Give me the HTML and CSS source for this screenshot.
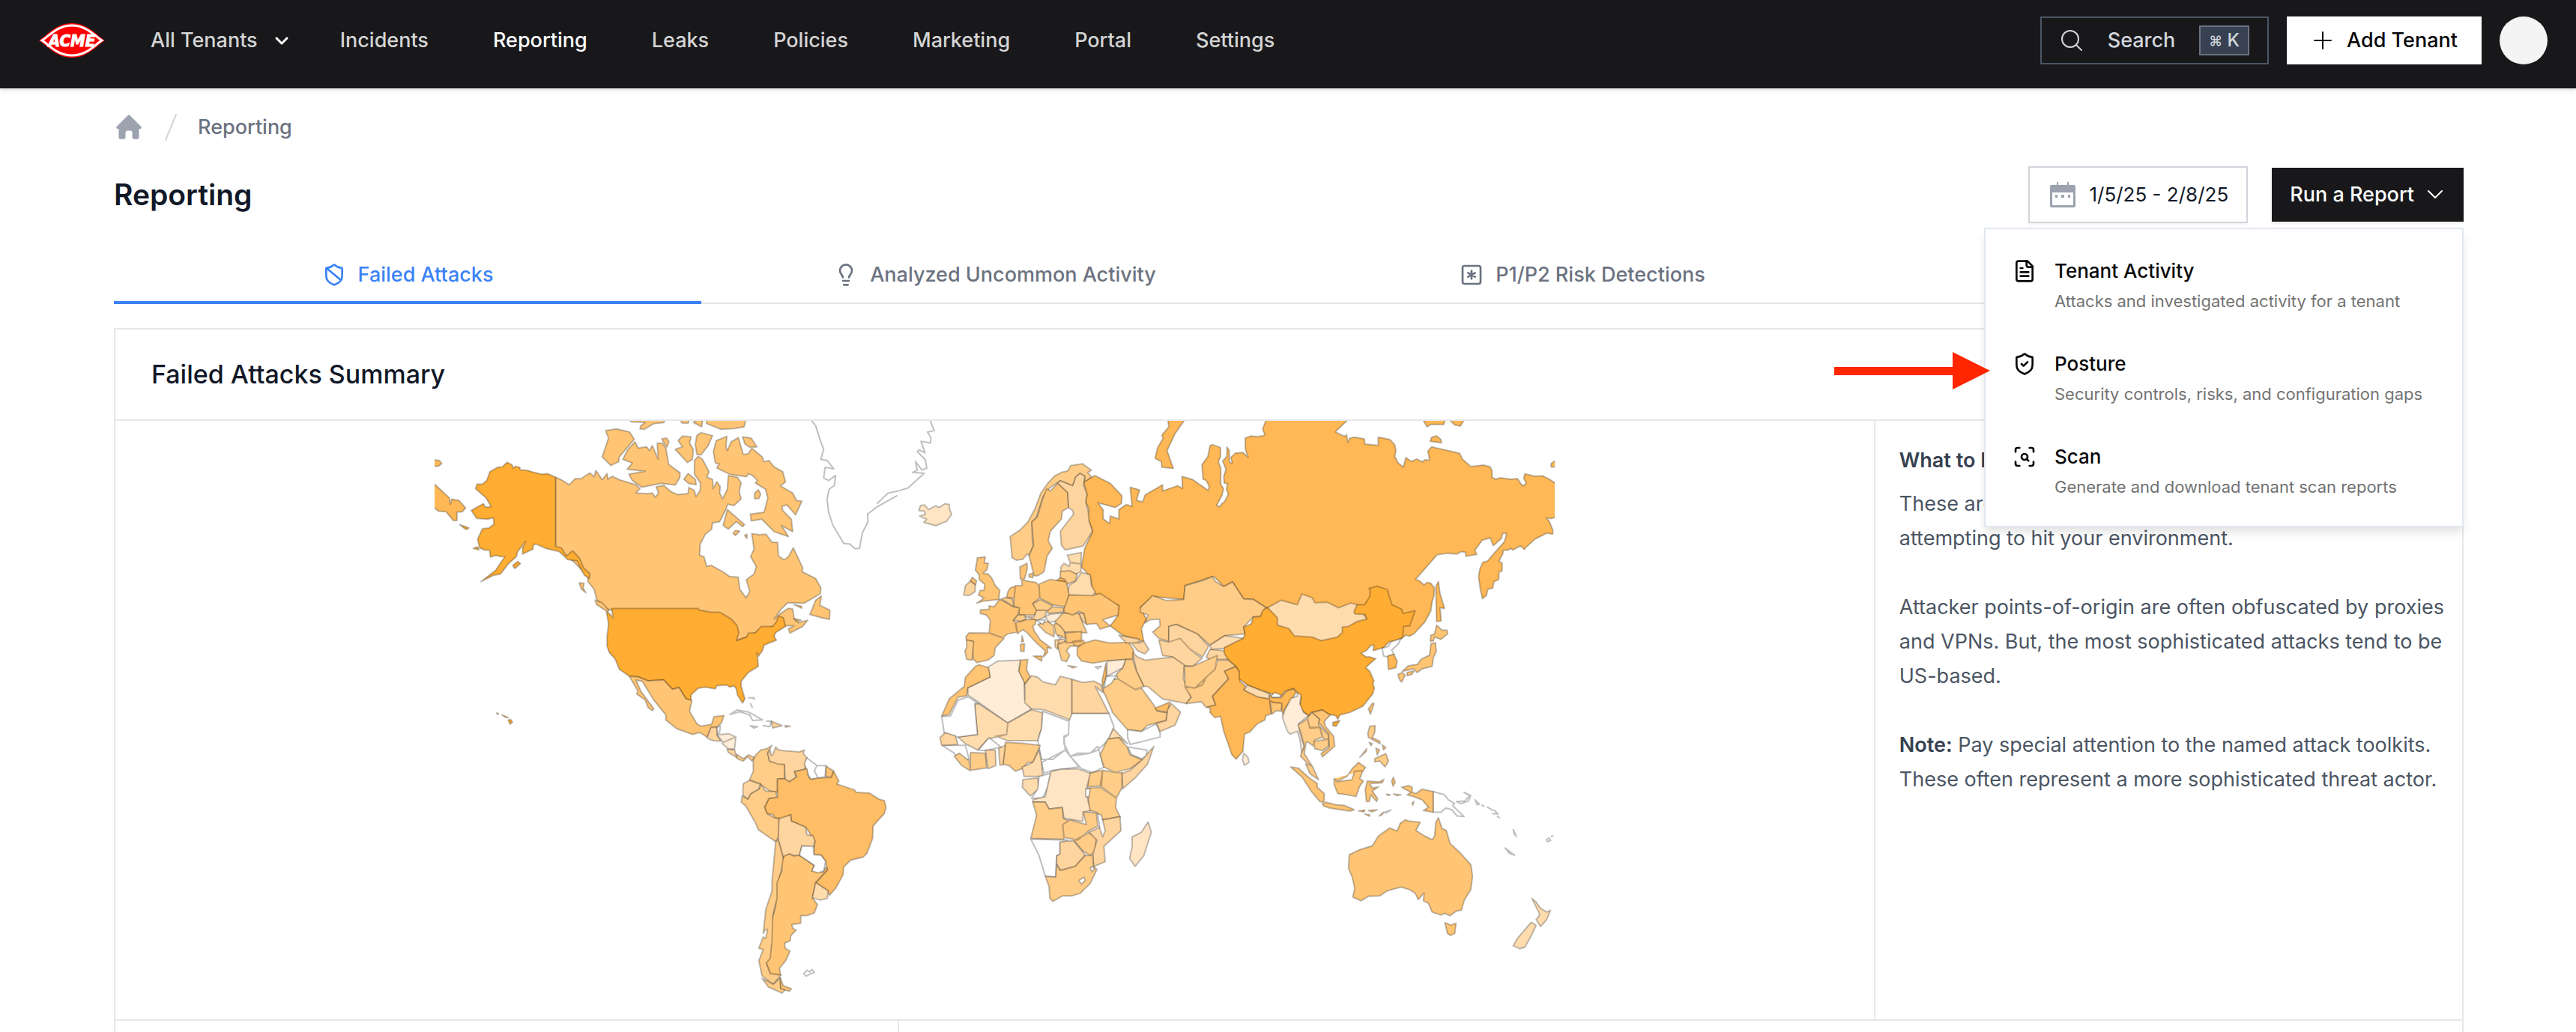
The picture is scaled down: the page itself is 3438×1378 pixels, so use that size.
FILE: index.html
```html
<!DOCTYPE html>
<html lang="en">
<head>
<meta charset="utf-8">
<title>Reporting</title>
<link rel="stylesheet" href="styles.css">
</head>
<body>
<header class="topbar">
  <a class="logo" href="#" aria-label="ACME home">
    <svg viewBox="0 0 88 46" width="88" height="46">
      <path d="M0 23C10 17 22 0 44 0s34 17 44 23C78 29 66 46 44 46S10 29 0 23z" fill="#f00"/>
      <path d="M4 23C14 17 24 3 44 3s30 14 40 20C74 29 64 43 44 43S14 29 4 23z" fill="#f00" stroke="#fff" stroke-width="3"/>
      <text class="logo-text" x="44" y="31" text-anchor="middle">ACME</text>
    </svg>
  </a>
  <nav class="nav" aria-label="Main">
    <button class="nav-item tenants" type="button">All Tenants
      <svg class="chev" viewBox="0 0 24 24" width="24" height="24"><path d="M5 9l7 7 7-7"/></svg>
    </button>
    <a class="nav-item" href="#">Incidents</a>
    <a class="nav-item current" href="#" aria-current="page">Reporting</a>
    <a class="nav-item" href="#">Leaks</a>
    <a class="nav-item" href="#">Policies</a>
    <a class="nav-item" href="#">Marketing</a>
    <a class="nav-item" href="#">Portal</a>
    <a class="nav-item" href="#">Settings</a>
  </nav>
  <div class="actions">
    <button class="search" type="button">
      <svg class="line-icon" viewBox="0 0 32 32" width="32" height="32"><circle cx="14" cy="14" r="11"/><path d="M22 22l7 7"/></svg>
      <span>Search</span>
      <kbd class="kbd"><span class="cmd">⌘</span> K</kbd>
    </button>
    <button class="add" type="button">
      <svg class="line-icon" viewBox="0 0 24 24" width="24" height="24"><path d="M12 1v22M1 12h22"/></svg>
      Add Tenant
    </button>
    <button class="avatar" type="button" aria-label="Account"></button>
  </div>
</header>

<main class="page">
  <nav class="crumbs" aria-label="Breadcrumb">
    <a class="home" href="#" aria-label="Home">
      <svg viewBox="0 0 32 32" width="36" height="36"><path d="M14.9 1.7a1.6 1.6 0 0 1 2.2 0l13.400 13.400a1.600 1.600 0 0 1-1.200 2.700H28V28a2 2 0 0 1-2 2h-4a2 2 0 0 1-2-2v-6a2 2 0 0 0-2-2h-4a2 2 0 0 0-2 2v6a2 2 0 0 1-2 2H6a2 2 0 0 1-2-2V17.800H2.700a1.600 1.600 0 0 1-1.200-2.700z" fill="#9ca3af"/></svg>
    </a>
    <svg class="slash" viewBox="0 0 16 36" width="16" height="36"><path d="M1 35L15 1"/></svg>
    <a class="crumb" href="#">Reporting</a>
  </nav>

  <div class="title-row">
    <h1>Reporting</h1>
    <div class="tools">
      <button class="date" type="button">
        <svg viewBox="0 0 34 34" width="34" height="34" fill="#9ca3af"><path fill-rule="evenodd" d="M9 0h2v4h12V0h2v4h7a2 2 0 0 1 2 2v26a2 2 0 0 1-2 2H2a2 2 0 0 1-2-2V6a2 2 0 0 1 2-2h7zM3 14v17h28V14z"/><path d="M7 17h3v4H7zM15 17h4v4h-4zM24 17h3v4h-3z"/></svg>
        1/5/25 - 2/8/25
      </button>
      <div class="report">
        <button class="run" type="button" aria-expanded="true">Run a Report
          <svg class="chev" viewBox="0 0 24 24" width="24" height="24"><path d="M3 7l9 9 9-9"/></svg>
        </button>
        <div class="menu" role="menu">
          <a class="option" href="#" role="menuitem">
            <svg class="option-icon" viewBox="0 0 24 24" width="32" height="32"><path d="M15 2H6a2 2 0 0 0-2 2v16a2 2 0 0 0 2 2h12a2 2 0 0 0 2-2V7z"/><path d="M14 2v4a2 2 0 0 0 2 2h4M10 9H8M16 13H8M16 17H8"/></svg>
            <span class="option-title">Tenant Activity</span>
            <span class="option-note">Attacks and investigated activity for a tenant</span>
          </a>
          <a class="option" href="#" role="menuitem">
            <svg class="option-icon" viewBox="0 0 24 24" width="32" height="32"><path d="M20 13c0 5-3.500 7.500-7.660 8.950a1 1 0 0 1-.67-.01C7.500 20.500 4 18 4 13V6a1 1 0 0 1 1-1c2 0 4.500-1.200 6.240-2.720a1.170 1.170 0 0 1 1.520 0C14.510 3.810 17 5 19 5a1 1 0 0 1 1 1z"/><path d="M9 12l2 2 4-4"/></svg>
            <span class="option-title">Posture</span>
            <span class="option-note">Security controls, risks, and configuration gaps</span>
            <svg class="pointer" viewBox="0 0 208 50" width="208" height="50"><path d="M0 20h158V0l50 25-50 25V31H0z" fill="#ff2600"/></svg>
          </a>
          <a class="option" href="#" role="menuitem">
            <svg class="option-icon" viewBox="0 0 24 24" width="32" height="32"><path d="M3 7V5a2 2 0 0 1 2-2h2M17 3h2a2 2 0 0 1 2 2v2M21 17v2a2 2 0 0 1-2 2h-2M7 21H5a2 2 0 0 1-2-2v-2"/><circle cx="12" cy="12" r="3"/><path d="M16 16l-1.900-1.900"/></svg>
            <span class="option-title">Scan</span>
            <span class="option-note">Generate and download tenant scan reports</span>
          </a>
        </div>
      </div>
    </div>
  </div>

  <div class="tabs" role="tablist">
    <button class="tab active" role="tab" aria-selected="true" type="button">
      <svg class="tab-icon" viewBox="0 0 24 24" width="32" height="32"><path d="M20 13c0 5-3.500 7.500-7.660 8.950a1 1 0 0 1-.67-.01C7.500 20.500 4 18 4 13V6a1 1 0 0 1 1-1c2 0 4.500-1.200 6.240-2.720a1.170 1.170 0 0 1 1.520 0C14.510 3.810 17 5 19 5a1 1 0 0 1 1 1z"/><path d="M4.500 5.500L18.500 17"/></svg>
      Failed Attacks
    </button>
    <button class="tab" role="tab" type="button">
      <svg class="tab-icon" viewBox="0 0 24 24" width="32" height="32"><path d="M9 14.500C8.500 12 6 10.800 6 7.800a6 6 0 0 1 12 0c0 3-2.500 4.200-3 6.700M9 18h6M10 22h4"/></svg>
      Analyzed Uncommon Activity
    </button>
    <button class="tab" role="tab" type="button">
      <svg class="tab-icon" viewBox="0 0 24 24" width="32" height="32"><rect x="3" y="3" width="18" height="18" rx="2"/><path d="M12 8v8M8.500 14l7-4M8.500 10l7 4"/></svg>
      P1/P2 Risk Detections
    </button>
  </div>

  <section class="card">
    <h2>Failed Attacks Summary</h2>
    <div class="summary">
      <div class="map-pane">
        <svg class="map" viewBox="581 562 1496 800" role="img" aria-label="World map of failed attacks">
          <!-- Russia -->
          <g class="b" transform="translate(1600 550) scale(.33333)">
            <path d="M-457 280L-412 255-350 286-303 336-305 367-330 383-400 364-378 392-378 429-352 448-350 417-315 429-315 392-285 371-262 379-270 302-232 313-245 354-220 361-210 333-140 292-140 317-80 296-60 307-62 259-20 271 43 315 47 300 35 275 22 270 18 212 42 178 50 135 60 131 92 143 92 180 83 200 93 225 93 290 104 308 98 335 76 375 90 380 98 367 108 360 123 330 116 310 121 288 107 285 105 260 114 230 101 197 118 178 118 140 127 155 128 200 139 208 134 182 152 165 182 163 203 182 192 150 191 105 212 97 245 99 270 93 261 68 276 30 604 30 552 80 588 98 597 92 603 122 610 106 628 101 668 108 671 129 724 134 724 101 770 110 790 131 795 157 790 178 804 205 825 221 835 183 857 199 878 189 901 200 912 191 930 194 923 157 938 140 1050 166 1062 190 1095 219 1145 213 1172 220 1180 235 1180 262 1195 270 1212 264 1256 270 1281 267 1303 297 1317 287 1307 265 1312 248 1352 258 1382 256 1410 270 1440 290 1440 420 1417 428 1398 425 1410 440 1424 475 1423 490 1400 486 1352 510 1313 546 1310 552 1294 537 1262 554 1255 547 1243 555 1225 555 1223 570 1208 597 1221 608 1220 638 1208 642 1207 671 1187 682 1183 706 1163 711 1158 735 1142 749 1133 710 1126 660 1132 628 1143 603 1163 597 1190 565 1230 520 1239 486 1223 487 1217 508 1185 536 1173 505 1141 514 1111 555 1119 571 1075 579 1074 563 1056 560 1040 570 1000 567 960 573 873 672 888 676 908 694 920 684 935 687 949 706 948 735 940 760 935 798 911 842 868 889 850 899 835 895 817 908 700 830 560 830 300 820 275 785 225 752 185 750 140 682 105 700 65 659-50 696-55 752-180 740-230 784-205 830-225 870-215 920-300 895-350 858-322 821-315 777-375 752-420 721-430 659-465 622-452 547-420 479-440 423-435 390-448 360-443 330z"/>
            <path d="M902 30L920 60 935 50 987 50 992 30zM1008 30L1030 52 1053 57 1070 30zM932 118L938 102 958 96 975 110 978 124zM1440 190L1417 207 1417 221 1440 221z"/>
            <path d="M955 700L965 680 972 730 990 788 972 785 976 838 958 840z"/>
          </g>
          <g class="b" transform="translate(560 550) scale(.38265 .33333)">
            <path d="M40 275L55 290 107 345 110 370 115 350 140 355 163 385 152 400 133 402 133 435 120 435 95 400 68 398 50 380zM40 190L55 192 72 195 80 207 68 218 40 218z"/>
          </g>
          <!-- North America -->
          <g transform="translate(560 550) scale(.38265 .33333)">
            <path class="d" d="M477 262L497 272 525 292 545 268 565 268 597 245 612 260 618 235 640 272 657 247 660 270 675 258 700 272 757 292 772 308 757 325 800 328 815 325 825 342 837 325 828 300 855 295 880 320 905 332 940 327 942 303 962 315 967 340 982 315 983 285 962 250 962 195 975 178 990 190 1013 240 1005 262 1025 270 1027 308 1040 280 1052 300 1050 325 1060 348 1077 310 1080 255 1112 262 1125 285 1118 320 1125 348 1100 375 1078 370 1070 395 1050 440 1025 445 1022 470 1000 490 982 530 980 575 995 580 1005 620 1020 615 1060 640 1085 660 1115 663 1120 710 1142 745 1155 720 1143 673 1170 650 1178 620 1158 580 1170 550 1162 488 1190 492 1212 490 1232 522 1252 523 1255 577 1275 593 1290 580 1307 545 1340 625 1337 640 1385 668 1403 705 1402 728 1370 750 1345 767 1288 765 1265 790 1240 830 1262 808 1290 787 1305 790 1310 830 1325 845 1357 835 1340 860 1295 887 1290 870 1310 857 1280 857 1235 860 1175 885 1145 902 1108 917 1050 840 673 795 650 788 620 750 612 712 590 680 590 660 540 600 477 545z"/>
            <path class="d" d="M1035 205L1028 160 1038 115 1075 98 1072 140 1077 155 1090 120 1115 103 1132 170 1150 168 1162 145 1198 180 1205 200 1222 195 1240 220 1270 240 1280 280 1262 297 1305 325 1318 355 1337 358 1315 413 1285 373 1268 378 1270 395 1300 430 1305 480 1265 455 1290 500 1240 480 1197 430 1160 437 1157 410 1205 402 1218 345 1210 310 1175 285 1182 275 1165 255 1150 248 1143 260 1085 250 1040 225 1048 208zM712 190L730 150 755 120 765 145 795 140 805 155 815 135 835 190 832 125 850 125 862 145 872 210 912 245 910 265 895 293 845 287 778 302 745 275 733 250 790 238 727 230 745 205zM652 75L690 68 735 80 752 110 700 180 697 200 670 215 640 180 662 105zM905 115L920 97 950 100 945 125 958 150 955 190 937 203 895 150 920 140zM970 95L985 83 1025 95 1010 135 985 172 970 170 965 130zM848 108L865 105 873 120 865 142zM1130 100L1160 105 1180 140 1155 142 1138 128zM925 270L940 247 965 270 968 292 942 287zM1172 325L1185 312 1193 330 1187 347 1172 348zM1062 455L1077 392 1137 452 1130 460 1108 440 1080 470zM1097 487L1105 475 1120 478 1105 495zM1137 495L1145 490 1145 507zM735 30L860 30 855 43 820 47 787 70 772 68 775 55 790 42 740 40zM910 30L945 30 940 45 920 45zM958 42L975 30 990 37 987 60zM1003 30L1142 30 1135 60 1100 67 1055 70 1005 47zM560 685L577 687 573 705 583 725 567 710zM615 755L640 765 663 795 660 802 620 772zM1365 812L1385 755 1405 738 1400 775 1435 795 1433 832 1405 825zM1308 772L1335 778 1337 787zM1310 828L1335 835 1320 840z"/>
            <path class="a" d="M198 308L203 290 222 290 237 275 248 240 275 222 292 220 308 202 325 212 330 226 337 218 352 222 354 232 380 235 400 242 430 250 450 248 477 262 477 540 497 545 515 577 537 557 560 585 575 625 597 648 595 668 578 655 552 597 520 592 490 560 445 548 410 530 400 532 398 550 362 570 362 545 373 518 345 560 340 580 310 612 285 650 260 655 217 680 268 635 300 580 285 580 270 575 250 582 247 555 228 553 212 545 205 510 222 468 245 465 262 450 260 425 240 430 202 427 183 395 225 368 232 382 252 380 235 345zM328 615L345 600 355 608 335 628zM190 547L205 541 210 553zM142 452L175 465 165 472zM312 1235L320 1233 327 1243 318 1252zM272 1207L278 1210 274 1213zM290 1215L300 1219 313 1226 302 1224z"/>
            <path class="a" d="M655 802L665 808 678 825 673 788 975 788 980 795 1020 803 1050 803 1090 830 1110 855 1117 885 1108 917 1145 902 1150 887 1175 885 1195 860 1235 860 1248 842 1255 818 1272 825 1280 860 1245 885 1240 900 1248 915 1205 935 1200 955 1185 980 1180 965 1185 1020 1150 1045 1125 1080 1125 1100 1138 1150 1130 1167 1112 1135 1108 1110 1100 1098 1085 1103 1075 1095 1040 1097 1035 1110 1000 1103 975 1108 950 1135 950 1157 932 1150 908 1105 885 1112 855 1075 800 1078 765 1062 735 1060 700 1032 685 990 665 965 657 940 657 900 662 850z"/>
            <path class="d" d="M735 1060L765 1062 800 1078 855 1075 885 1112 908 1105 932 1150 953 1157 945 1200 970 1250 985 1260 1022 1252 1030 1222 1065 1217 1057 1245 1040 1265 1020 1265 1008 1305 980 1285 955 1293 900 1270 862 1235 862 1215 820 1155 780 1080 758 1075 775 1120 820 1190 815 1198 800 1185 790 1155 760 1130 765 1120z"/>
            <path class="w" d="M1085 1213L1110 1195 1150 1203 1200 1235 1165 1237 1155 1215 1120 1202zM1157 1258L1182 1262 1170 1267zM1200 1257L1225 1262 1230 1240 1212 1240M1150 1147L1170 1145 1170 1155M1157 1168L1165 1187"/>
            <path class="f" d="M1230 1240L1268 1258 1235 1267zM1278 1257L1297 1260 1280 1264z"/>
            <path class="w" d="M1367 30L1385 55 1400 110 1413 150 1403 190 1425 195 1448 228 1418 222 1413 265 1430 275 1455 255 1450 295 1432 310 1425 350 1430 400 1445 455 1483 527 1505 530 1522 548 1538 547 1548 485 1568 440 1566 410 1600 380 1670 335"/>
          </g>
          <!-- Central and South America -->
          <g transform="translate(940 950) scale(.33333)">
            <path class="f" d="M15 105L30 65 55 65 55 95 70 120 40 118 20 110zM95 152L125 155 133 185 100 165z"/>
            <path class="w" d="M55 65L68 58 65 85 57 92z"/>
            <path class="i" d="M55 95L100 90 130 103 80 125zM80 125L130 103 125 152 100 150 75 130z"/>
            <path class="e" d="M133 172L160 190 180 175 205 185 195 200 178 182 160 200 135 190z"/>
            <path class="e" d="M275 137L258 165 265 200 325 213 325 270 297 272 297 325 265 320 228 292 185 275 200 240 200 195 210 175 230 155 255 150z"/>
            <path class="f" d="M290 143L300 155 320 158 385 163 405 155 400 168 415 187 405 235 365 240 372 265 345 283 328 275 325 213 300 212 265 200 258 170 268 155 272 178 280 170z"/>
            <path class="w" d="M415 187L455 218 445 240 460 268 430 273 418 250 405 210zM455 218L492 218 488 263 460 268 445 240z"/>
            <path class="d" d="M492 220L522 240 513 265 490 263z"/>
            <path class="c" d="M297 272L325 270 345 283 375 262 365 243 415 230 420 260 430 273 460 268 513 265 522 240 543 280 535 292 560 300 605 315 612 325 665 328 705 353 725 358 732 385 725 410 680 460 678 510 655 570 640 585 590 597 562 625 560 655 530 710 505 738 500 720 450 687 497 635 490 602 472 577 442 575 447 520 410 465 352 440 350 415 315 430 287 428 280 415 255 410 245 385 262 350 297 345z"/>
            <path class="e" d="M228 292L250 320 290 322 295 345 262 350 245 385 255 410 287 428 303 430 303 500 290 523 220 475 210 450 170 380 152 365 155 340 178 352 190 330 225 310z"/>
            <path class="f" d="M160 290L185 277 228 292 222 312 190 330 178 352 160 338 158 320z"/>
            <path class="f" d="M303 430L350 415 352 440 410 465 415 495 440 500 447 520 440 545 395 540 385 577 362 580 345 572 320 587 300 515z"/>
            <path class="d" d="M345 572L362 580 385 577 445 618 435 640 480 645 490 625 497 635 450 687 437 748 457 775 445 808 420 818 390 820 390 850 355 855 358 870 372 878 350 900 348 920 325 930 328 950 347 962 330 1000 305 1030 310 1058 268 1052 252 1010 270 950 270 850 290 780 290 690 315 640 312 600 325 580z"/>
            <path class="w" d="M395 540L440 542 443 575 472 577 490 602 482 640 460 648 435 640 445 618 385 577z"/>
            <path class="g" d="M450 687L500 720 497 750 470 757 437 748z"/>
            <path class="e" d="M290 523L300 515 320 587 312 640 295 690 295 750 278 820 275 920 268 990 252 1010 268 1052 310 1058 280 1095 235 1060 222 1000 240 955 222 950 240 905 250 910 257 875 248 875 240 890 250 795 275 720 275 680z"/>
            <path class="e" d="M235 1070L280 1095 308 1068 310 1112 330 1115 315 1130 260 1105z"/>
            <path class="d" d="M308 1068L320 1100 353 1112 345 1122 310 1112z"/>
            <path class="w" d="M402 1052L415 1038 425 1045 435 1035 445 1047 430 1052 412 1062z"/>
          </g>
          <!-- Europe, Africa and the Middle East -->
          <g transform="translate(1200 550) scale(.33333 .41454)">
            <path class="w" d="M-85 296L-40 262 0 255 40 245 105 198 58 195 77 188 70 160 95 187 115 182 110 155 78 128 85 122 108 132 92 95 130 100 132 82 118 65 145 60 125 20"/>
            <path class="b" d="M1080 22L1152 22 1110 70 1078 125 1103 182 1057 178 1055 160 1030 150 1040 115 1062 85 1057 75 1085 48z"/>
            <path class="h" d="M83 318L90 302 107 300 122 315 150 303 165 308 188 296 205 298 207 315 215 330 195 352 152 367 103 356 115 346 86 336 110 330 105 320z"/>
            <path class="e" d="M449 402L490 380 520 355 550 310 572 262 600 230 628 206 655 195 680 190 692 173 738 167 775 188 760 195 775 210 748 225 748 207 730 198 712 210 700 238 650 222 608 245 580 275 555 340 537 355 538 410 543 430 525 463 518 457 500 475 475 478 457 470z"/>
            <path class="d" d="M525 463L543 430 536 355 557 340 580 280 595 248 610 255 640 230 680 258 683 308 658 320 655 345 610 385 602 415 618 440 597 465 585 515 560 528 545 528z"/>
            <path class="f" d="M640 230L650 222 700 238 712 210 730 198 748 207 743 235 757 265 752 290 762 320 765 350 779 385 742 432 670 445 655 430 650 385 703 330 700 318 683 308 680 260z"/>
            <path class="g" d="M678 462L735 453 733 490 690 485zM652 500L665 488 685 498 690 486 733 490 733 515 715 522 652 515zM680 590L685 560 712 545 735 517 770 525 775 560 790 580 780 595z"/>
            <path class="e" d="M650 515L690 512 718 525 710 545 680 555 650 535z"/>
            <path class="b" d="M633 545L650 535 670 540 668 547z"/>
            <path class="d" d="M565 555L610 540 675 548 685 590 675 628 620 622 568 600zM495 540L515 545 553 550 565 560 568 600 540 618 560 640 545 655 485 655 483 632 463 625 470 560 497 560zM488 500L517 488 518 505 510 530 505 540 490 538zM525 523L540 520 540 535 525 532zM440 580L450 567 470 562 465 600 435 598zM318 470L350 468 345 487 362 488 355 510 340 520 360 522 375 535 390 560 408 575 403 605 340 610 315 617 345 600 322 590 330 575 345 575 347 555 325 540 325 525 310 510zM290 545L297 533 315 545 310 558z"/>
            <path class="d" d="M330 638L365 636 365 625 385 628 408 603 463 628 487 632 480 655 462 672 472 680 478 710 440 715 420 728 365 712 370 672 355 655 330 650zM272 725L285 712 365 713 425 730 390 760 385 785 360 800 315 808 300 795 298 740 275 738zM470 680L510 670 553 668 550 685 540 690 545 705 570 735 615 762 597 760 600 775 582 790 590 770 555 745 515 710 500 702 478 715zM542 787L577 787 575 803zM490 750L507 748 505 772 492 772zM497 722L503 740 495 742z"/>
            <path class="e" d="M275 735L303 740 297 800 275 798 268 770 275 760zM415 603L430 598 460 603 463 628zM462 672L480 655 508 655 513 668 490 675zM540 618L570 605 620 625 600 642 555 640zM600 640L620 628 668 632 660 645 600 650zM560 685L600 675 625 690 625 725 590 710zM625 685L640 680 665 700 672 730 650 725 632 715z"/>
            <path class="f" d="M263 590L270 560 290 545 310 558 308 580 285 592zM510 660L545 660 555 640 595 640 590 660 560 672zM628 735L645 735 640 765 630 758zM640 733L668 733 668 745 645 748zM722 648L745 650 757 685 740 675z"/>
            <path class="i" d="M590 660L610 652 665 648 645 672 605 678z"/>
            <path class="w" d="M555 672L590 670 580 685zM640 722L655 722 652 732zM790 822L815 820 800 828z"/>
            <path class="e" d="M628 678L660 648 725 650 745 690 757 712 670 710 650 690zM640 750L670 740 735 745 730 755 690 755 675 770 688 785 675 805 655 800 645 770zM680 818L715 822 700 825z"/>
            <path class="d" d="M670 712L735 708 735 740 675 745zM665 635L685 590 780 592 810 585 885 625 882 655 820 670 850 690 810 700 795 682 755 685 745 650 725 643 700 655 665 645zM718 760L745 745 790 735 850 745 925 743 945 770 940 797 840 802 780 810 735 803 718 785zM700 740L740 735 750 745 720 755 705 752z"/>
            <path class="f" d="M885 720L965 732 970 745 915 745zM935 745L985 740 1005 765 990 780 960 770z"/>
            <path class="e" d="M972 630L1020 592 1075 608 1145 605 1150 560 1215 545 1260 531 1272 547 1305 563 1340 548 1385 603 1425 605 1475 631 1452 659 1423 661 1385 693 1390 716 1310 721 1250 752 1200 716 1115 685 1085 692 1085 740 1045 730 1020 710 1050 690 1048 668 1010 670 990 680 1002 655 970 645z"/>
            <path class="f" d="M1085 692L1115 685 1200 716 1245 755 1220 790 1170 765 1130 730 1085 742zM1045 735L1085 742 1130 730 1170 765 1218 795 1180 820 1145 818 1100 790 1060 785zM1235 790L1250 765 1310 770 1325 798 1245 797z"/>
            <path class="g" d="M1250 752L1310 721 1390 730 1310 762 1255 765z"/>
            <path class="f" d="M940 775L960 790 990 800 1050 795 1100 790 1147 815 1143 860 1175 920 1155 940 1090 930 1060 925 1000 885 985 885 955 835z"/>
            <path class="e" d="M1147 820L1180 820 1245 797 1280 785 1270 830 1235 855 1220 880 1190 890 1150 885zM1150 887L1190 890 1235 855 1270 830 1280 800 1325 800 1355 820 1310 836 1325 860 1260 917 1273 945 1235 953 1215 934 1155 940 1175 920zM912 798L940 797 955 835 985 885 950 895 880 860 875 845 900 825zM820 895L850 865 880 860 950 895 975 890 1025 945 1040 965 1080 970 1073 995 1000 1010 975 1030 920 1025 860 970 845 940z"/>
            <path class="i" d="M838 803L912 798 900 825 835 853z"/>
            <path class="c" d="M833 810L835 850 820 888 818 865zM1030 955L1090 935 1080 968 1035 962z"/>
            <path class="w" d="M825 890L835 853 875 850 855 875zM920 1025L975 1030 1035 1005 1050 1035 1050 1048 930 1072 920 1050z"/>
            <path class="f" d="M1035 1003L1075 995 1080 960 1095 940 1132 968 1110 1010 1050 1030z"/>
            <path class="d" d="M325 815L365 825 370 855 280 890 275 915 240 920 205 975 175 980 205 925 265 885 270 855 310 820zM490 800L520 798 515 830 530 855 508 878 483 838z"/>
            <path class="i" d="M280 890L370 855 362 822 400 803 490 800 483 835 505 870 508 925 535 958 440 1003 280 912z"/>
            <path class="g" d="M508 925L508 878 535 850 560 855 580 870 630 880 650 852 697 862 697 995 585 960 535 957 508 938zM240 1048L318 1040 307 940 322 940 440 1003 435 1040 360 1055 320 1090 270 1070zM440 1003L535 960 580 970 575 1020 560 1060 440 1060 390 1045 435 1040zM840 1055L862 1020 920 1070 885 1050z"/>
            <path class="f" d="M697 862L740 872 785 868 815 880 822 905 790 885 845 972 697 972z"/>
            <path class="w" d="M175 982L210 980 240 930 280 918 322 940 307 940 318 1040 240 1048 185 1035zM580 965L685 997 683 1040 665 1050 670 1090 620 1120 575 1120 560 1060 575 1020zM685 997L697 972 845 972 865 1015 840 1060 800 1090 770 1100 690 1110 665 1070 665 1045 683 1040zM575 1130L670 1090 725 1145 620 1155 585 1165zM690 1110L720 1100 770 1100 800 1078 810 1105 825 1145 780 1162 735 1150zM322 1090L365 1050 412 1080 350 1092zM178 1075L270 1075 285 1120 245 1120 225 1100zM920 1080L998 1090 995 1110 975 1118 935 1105z"/>
            <path class="e" d="M810 1105L840 1055 885 1050 918 1080 930 1105 980 1122 930 1150 870 1162 825 1145zM820 1155L870 1162 898 1163 898 1210 875 1245 810 1205zM765 1165L820 1155 815 1205 760 1208zM760 1212L810 1210 875 1245 872 1275 890 1305 820 1315 795 1290 765 1285zM420 1135L430 1065 500 1068 570 1075 540 1130 520 1130 497 1150 470 1158 445 1140zM290 1098L350 1100 355 1148 290 1155zM225 1110L245 1100 285 1125 290 1157 255 1140z"/>
            <path class="f" d="M980 1120L1025 1078 1000 1135 950 1180 900 1215 898 1165 930 1155zM168 1050L190 1033 230 1045 240 1072 175 1075zM350 1090L390 1090 392 1140 360 1150zM403 1085L430 1075 420 1138 408 1138z"/>
            <path class="g" d="M500 1185L560 1180 565 1215 530 1238 498 1210zM497 1145L540 1130 565 1090 575 1130 580 1175 505 1175z"/>
            <path class="w" d="M535 1245L560 1215 565 1175 612 1165 600 1210 580 1245z"/>
            <path class="h" d="M540 1250L590 1240 612 1160 650 1152 720 1150 770 1165 755 1215 760 1250 770 1285 742 1290 740 1320 665 1310 658 1275 605 1280 590 1258 540 1258z"/>
            <path class="e" d="M540 1258L590 1258 605 1280 658 1275 662 1310 685 1318 660 1330 665 1378 532 1375 555 1300zM660 1330L690 1315 755 1330 742 1290 795 1293 800 1335 765 1350 720 1380 665 1372zM705 1382L765 1357 795 1370 790 1415 770 1430 740 1415z"/>
            <path class="f" d="M820 1315L890 1305 893 1350 825 1400 830 1450 785 1465 780 1430 797 1380 765 1355 805 1340zM648 1385L703 1382 750 1428 710 1465 650 1478 635 1455 635 1430 648 1425z"/>
            <path class="w" d="M800 1295L815 1300 830 1350 820 1370 808 1340zM532 1377L680 1380 648 1387 648 1425 635 1430 632 1500 590 1497 565 1430zM752 1215L770 1215 765 1240 752 1240z"/>
            <path class="e" d="M590 1497L632 1500 635 1460 650 1478 710 1465 750 1430 780 1430 783 1465 797 1475 770 1520 730 1552 695 1560 660 1560 620 1578 608 1568 605 1530z"/>
            <path class="w" d="M725 1510L745 1500 750 1510 735 1522zM770 1470L780 1465 787 1475 777 1482z"/>
            <path class="h" d="M1002 1322L1015 1355 985 1430 950 1465 928 1440 938 1400 938 1370 975 1355z"/>
          </g>
          <!-- India and China -->
          <path class="b" transform="translate(1590 850) scale(.33333)" d="M185 120L202 150 200 180 222 198 216 215 270 240 318 250 320 232 330 245 365 245 385 220 415 208 425 225 405 255 380 290 372 315 365 270 320 262 325 310 303 318 300 335 270 350 240 383 218 392 212 460 185 492 168 475 135 380 122 320 100 326 80 305 82 290 70 283 103 275 90 240 155 170 138 140z"/>
          <path class="g" transform="translate(1600 550) scale(.33333)" d="M281 785L335 755 400 773 418 730 460 745 470 765 520 763 565 785 615 766 640 773 680 830 560 910 495 920 380 900 310 850z"/>
          <path class="a" transform="translate(1600 550) scale(.33333)" d="M281 785L320 825 320 855 365 868 388 898 460 903 495 917 560 903 580 885 580 862 605 860 640 840 679 830 670 812 630 810 627 800 640 773 670 772 690 740 692 715 687 708 720 699 760 712 779 773 817 790 823 808 872 797 850 858 825 860 823 900 817 908 785 920 770 920 745 945 704 957 707 935 695 936 675 958 655 967 675 982 690 982 714 990 705 997 688 1012 674 1025 690 1040 707 1078 702 1092 709 1105 702 1130 662 1180 610 1205 570 1215 562 1232 555 1218 525 1212 500 1195 455 1205 445 1220 408 1185 415 1145 400 1125 385 1108 350 1120 335 1140 290 1128 250 1115 200 1095 167 1070 167 1040 155 1020 125 995 107 968 107 945 183 908 190 890 185 862 215 850 223 822 252 820 262 795 275 787z"/>
          <!-- South Asia -->
          <g transform="translate(1590 850) scale(.33333)">
            <path class="g" d="M230 195L318 230 315 250 270 242 216 215z"/>
            <path class="w" d="M325 238L340 225 365 235 360 243 330 244z"/>
            <path class="d" d="M320 255L330 265 368 268 365 300 345 298 328 312z"/>
            <path class="i" d="M215 468L232 485 236 505 218 517 210 495zM370 325L380 295 405 248 430 240 430 225 445 235 440 270 455 305 475 318 435 350 440 385 458 440 448 470 440 410 430 380 400 392 390 380z"/>
          </g>
          <!-- East Asia and Oceania -->
          <g transform="translate(1700 750) scale(.33333)">
            <path class="e" d="M103 655L140 630 150 665 190 665 200 705 170 715 165 740 145 725 135 725 128 770 150 805 160 820 140 808 112 780 128 740 115 690zM140 625L160 605 190 632 185 655 225 695 225 712 205 712 190 665 150 668zM165 720L225 712 225 740 200 758 170 750zM133 810L160 820 185 875 150 850z"/>
            <path class="d" d="M160 605L200 595 232 615 208 640 212 660 245 700 250 740 200 783 195 770 228 745 225 690 185 645 190 632z"/>
            <path class="d" d="M73 823L105 828 145 865 180 890 180 905 208 930 207 965 190 962 155 920 120 865zM200 970L215 965 255 975 290 978 328 995 310 1000 230 988 205 980zM247 870L262 880 300 860 320 830 345 805 373 825 360 845 350 870 365 880 350 900 335 942 300 935 262 930 248 895zM247 870L258 882 318 875 330 840 360 838M372 915L380 880 430 883 447 873 440 887 390 890 400 908 425 903 400 920 422 950 418 962 395 935 388 962 377 962zM518 905L545 898 560 905 560 925 575 930 600 912 645 922 645 1005 605 998 625 985 600 955 560 940 540 935 555 925zM478 880L485 865 492 885 483 900zM485 932L515 935 500 938zM457 932L473 935 463 938zM560 968L567 962 563 977zM345 1000L370 996 368 1003zM385 998L420 995 400 1003zM370 1012L390 1015 388 1021zM427 1020L445 1005 440 1015z"/>
            <path class="e" d="M390 660L412 658 410 685 400 705 430 720 432 730 385 705 382 690zM410 790L455 770 465 800 452 823 430 800 410 803zM440 735L455 745 445 755zM415 748L430 755 420 775zM388 725L400 730 395 738zM350 785L378 750 375 762z"/>
            <path class="d" d="M385 590L402 567 407 570 393 612z"/>
            <path class="a" d="M242 645L270 637 255 660 242 657z"/>
            <path class="w" d="M645 922L690 935 705 955 730 970 722 978 768 1022 740 1020 720 995 695 988 675 1005 645 1005zM738 962L770 960 790 940 768 925 795 938 785 960 755 970zM812 955L830 972 820 975zM838 975L850 983M860 983L885 998M888 995L903 1012 880 1010M900 1020L912 1028M965 1075L978 1102 968 1090zM932 1148L970 1177 950 1170zM1098 1115L1108 1108 1115 1118 1102 1123zM1115 1102L1127 1098M447 1005L475 996 455 1008zM440 348L465 340 475 322 515 308 505 330 478 355 487 372 460 382 445 378z"/>
            <path class="b" d="M462 378L487 372 500 400 495 425 465 433z"/>
            <path class="d" d="M633 320L635 295 650 290 658 255 680 275 700 275 702 290 675 312 650 302 645 318zM635 330L653 325 657 360 645 385 640 420 600 430 580 445 565 430 520 440 545 418 582 412 595 392 630 375zM503 452L520 445 532 455 518 483 510 475zM540 445L567 438 560 452 540 458z"/>
            <path class="d" d="M533 1035L545 1040 592 1045 575 1078 610 1100 640 1115 650 1100 655 1045 665 1027 680 1070 697 1078 712 1130 750 1165 795 1215 802 1262 795 1315 770 1355 757 1397 735 1402 712 1420 690 1410 675 1417 640 1405 625 1370 605 1360 608 1328 585 1355 572 1330 550 1315 515 1305 460 1320 430 1340 385 1342 355 1360 322 1345 330 1310 320 1265 305 1230 308 1175 350 1155 400 1140 425 1100 470 1068 500 1080 512 1050z"/>
          </g>
          <g transform="translate(1200 1150) scale(.82908 .33333)">
            <path class="d" d="M881 247L890 257 899 250 897 290 890 299 885 290z"/>
            <path class="g" d="M1021 150L1028 165 1035 190 1045 205 1051 198 1045 235 1035 263 1028 235 1034 215zM1020 246L1028 258 1020 300 1010 345 1002 352 991 340 998 310z"/>
          </g>
        </svg>
      </div>
      <aside class="notes">
        <h3>What to Know</h3>
        <p>These are the locations that attackers are<br>attempting to hit your environment.</p>
        <p>Attacker points-of-origin are often obfuscated by proxies<br>and VPNs. But, the most sophisticated attacks tend to be<br>US-based.</p>
        <p><strong>Note:</strong> Pay special attention to the named attack toolkits.<br>These often represent a more sophisticated threat actor.</p>
      </aside>
    </div>
    <div class="lower"><div></div><div></div></div>
  </section>
</main>
</body>
</html>
```
FILE: styles.css
```css
* { box-sizing: border-box; }
body {
  margin: 0;
  background: #fff;
  color: #111827;
  font: 400 27px/40px Inter, "Liberation Sans", sans-serif;
}
a { color: inherit; text-decoration: none; }
button { font: inherit; color: inherit; border: 0; background: none; padding: 0; cursor: pointer; }
svg { display: block; flex: none; }
.chev, .line-icon, .option-icon, .tab-icon, .slash path {
  fill: none; stroke: currentColor; stroke-width: 2; stroke-linecap: round; stroke-linejoin: round;
}

/* top bar */
.topbar {
  display: flex;
  align-items: center;
  padding: 22px 38px 32px 52px;
  background: #18181b;
  box-shadow: 0 2px 6px rgba(0, 0, 0, .15);
  font-weight: 500;
}
.logo { margin-right: 61px; }
.logo-text { font: italic 700 22px "Liberation Sans Narrow", "DejaVu Sans Condensed", sans-serif; fill: #fff; stroke: #fff; stroke-width: 1; }
.nav { display: flex; gap: 86px; color: #d4d4d4; }
.nav-item { white-space: nowrap; }
.nav-item.current { color: #fff; }
.tenants { display: flex; align-items: center; gap: 20px; margin-right: -20px; }
.tenants .chev { color: #fff; stroke-width: 3; }
.actions { display: flex; gap: 24px; margin-left: auto; }
.search {
  display: flex; align-items: center; gap: 32px;
  height: 64px; padding: 0 24px;
  border: 2px solid #4b5563; color: #d1d5db;
}
.kbd {
  height: 40px; padding: 0 11px;
  border: 2px solid #6b7280; background: #374151;
  font: 500 24px/36px Inter, sans-serif; color: #d1d5db;
}
.cmd { font-size: 18px; vertical-align: 1px; }
.add {
  display: flex; align-items: center; gap: 20px;
  height: 64px; padding: 0 32px 0 36px;
  background: #fff; color: #09090b;
}
.avatar { width: 64px; height: 64px; border-radius: 50%; background: #f4f4f5; }

/* page head */
.page { padding: 32px 150px 0 152px; }
.crumbs { display: flex; align-items: center; gap: 28px; color: #6b7280; font-weight: 500; }
.home { padding: 0 2px; }
.slash { color: #d1d5db; }
.title-row { display: flex; align-items: center; justify-content: space-between; margin-top: 32px; height: 76px; }
h1 { margin: 0; font-size: 39px; font-weight: 600; }
.tools { display: flex; align-items: center; gap: 32px; }
.date {
  display: flex; align-items: center; gap: 18px;
  height: 76px; padding: 0 24px 0 27px; font-size: 26px;
  border: 2px solid #d1d5db; box-shadow: 0 2px 4px rgba(0, 0, 0, .06);
}
.report { position: relative; }
.run {
  display: flex; align-items: center; gap: 16px;
  height: 72px; padding: 0 26px 0 24px;
  background: #18181b; color: #fff; font-weight: 500;
  box-shadow: 0 2px 4px rgba(0, 0, 0, .1);
}
.menu {
  position: absolute; z-index: 2; top: calc(100% + 8px); right: 0;
  width: 640px; padding: 16px 8px 8px;
  border: 2px solid #e2e8f0; background: #fff; color: #09090b;
  box-shadow: 0 8px 12px -2px rgba(0, 0, 0, .12);
}
.option {
  position: relative;
  display: grid; grid-template-columns: 32px 1fr; grid-template-rows: 44px 36px; column-gap: 24px;
  padding: 18px 28px 0; height: 124px;
}
.option-icon { margin-top: 6px; }
.option-title { font-size: 26px; font-weight: 500; line-height: 44px; }
.option-note { grid-column: 2; font-size: 22px; line-height: 36px; color: #737373; white-space: nowrap; }
.pointer { position: absolute; right: calc(100% + 2px); top: 24px; }

/* tabs */
.tabs {
  display: grid; grid-template-columns: repeat(4, 1fr);
  margin-top: 30px; border-bottom: 2px solid #e5e7eb;
  color: #6b7280; font-weight: 500;
}
.tab {
  display: flex; align-items: center; justify-content: center; gap: 16px;
  height: 78px; padding-top: 4px; border-bottom: 4px solid transparent; margin-bottom: -2px; white-space: nowrap;
}
.tab.active { border-color: #3b82f6; color: #3b82f6; }

/* summary card */
.card { margin-top: 32px; border: 2px solid #e5e7eb; border-bottom: 0; }
h2 { margin: 0; padding: 36px 48px; font-size: 34px; font-weight: 500; line-height: 48px; border-bottom: 2px solid #e5e7eb; }
.summary { display: grid; grid-template-columns: 3fr 1fr; border-bottom: 2px solid #e5e7eb; }
.map-pane { display: flex; justify-content: center; }
.map { width: 63.7%; height: auto; overflow: hidden; }
.map path { stroke: #000; stroke-opacity: .25; stroke-width: 2; vector-effect: non-scaling-stroke; stroke-linejoin: round; }
.a { fill: #ffad33; }
.b { fill: #ffb855; }
.c { fill: #ffbe66; }
.d { fill: #ffc575; }
.e { fill: #ffcd88; }
.f { fill: #ffd59f; }
.g { fill: #ffdcae; }
.h { fill: #ffe5c4; }
.i { fill: #ffedd8; }
.w { fill: #fff; }
.notes { padding: 30px 24px 0 32px; border-left: 2px solid #e5e7eb; color: #4b5563; line-height: 46px; white-space: nowrap; }
.notes h3 { margin: 0 0 12px; font-size: 27px; font-weight: 600; color: #374151; }
.notes p { margin: 0 0 46px; }
.notes strong { font-weight: 600; color: #374151; }
.lower { display: grid; grid-template-columns: 1fr 2fr; height: 64px; }
.lower div + div { border-left: 2px solid #e5e7eb; }
```
